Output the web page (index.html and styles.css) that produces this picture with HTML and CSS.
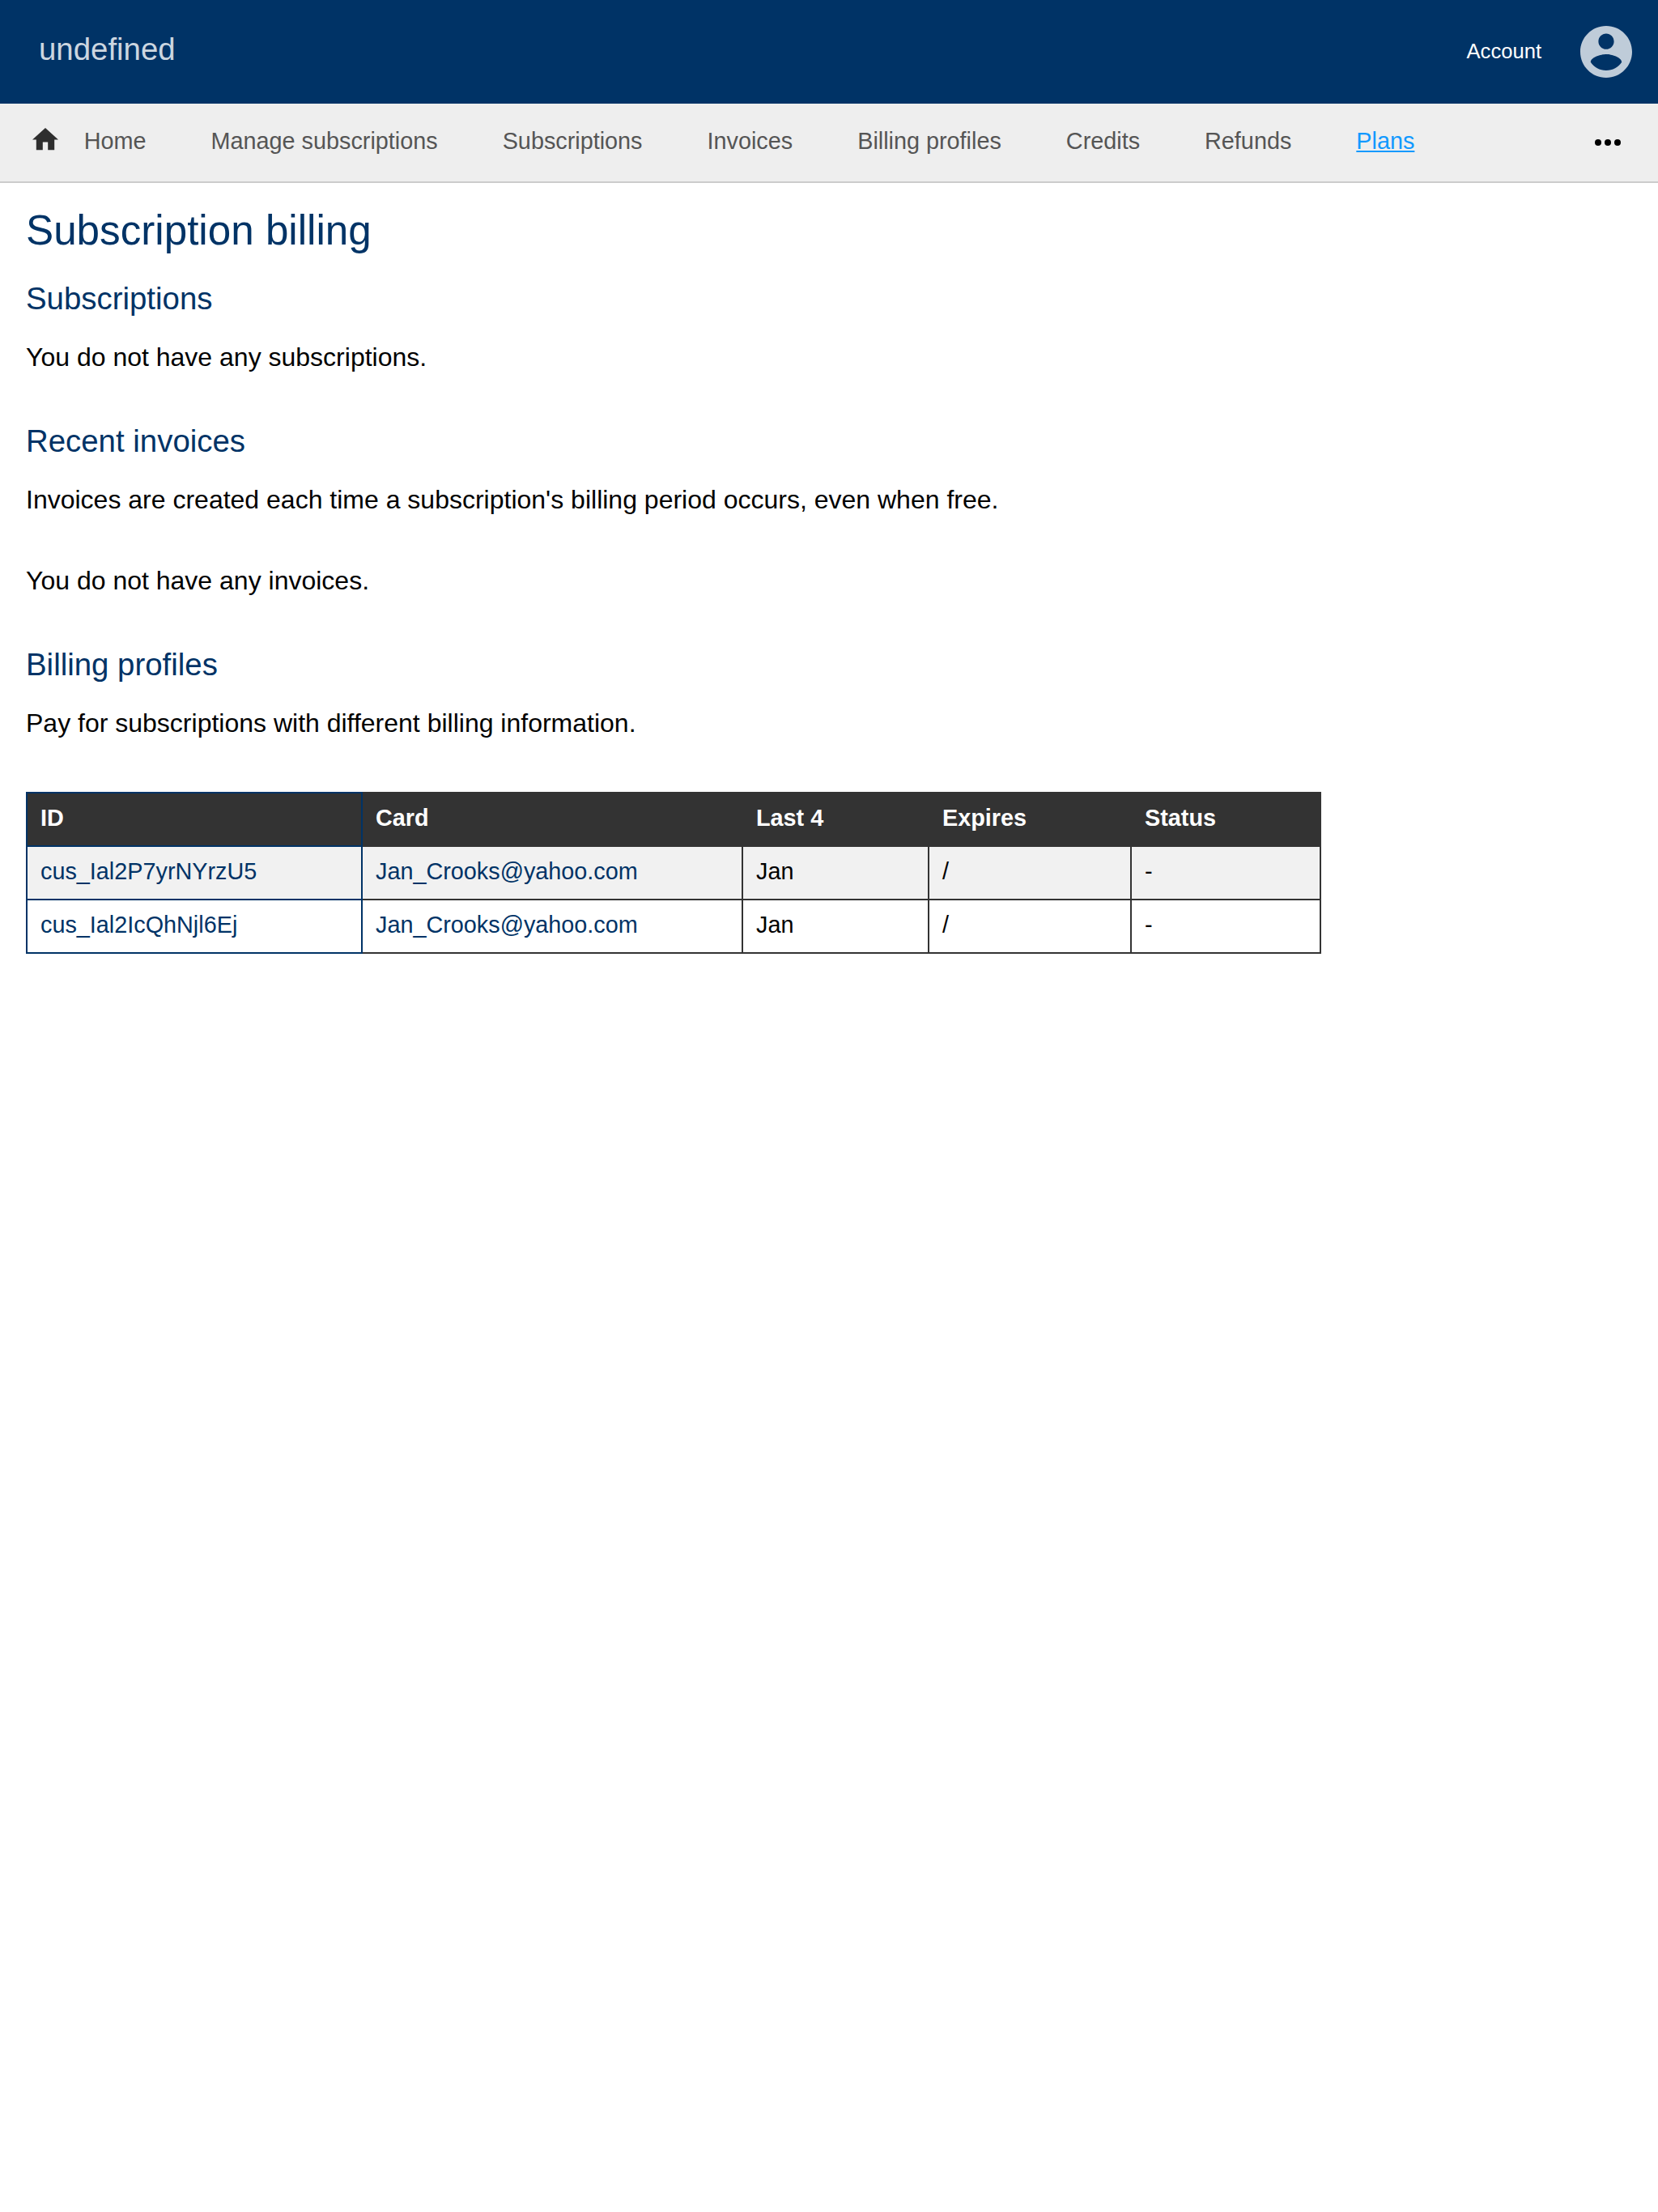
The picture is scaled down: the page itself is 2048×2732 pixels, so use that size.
FILE: index.html
```html
<!DOCTYPE html>
<html lang="en">
<head>
<meta charset="utf-8">
<title>Subscription billing</title>
<link rel="stylesheet" href="styles.css">
</head>
<body>
<header class="header">
  <h1 class="brand">undefined</h1>
  <nav class="account">
    <a class="account-link">Account</a>
    <svg class="avatar" viewBox="2 2 20 20"><path d="M12 2C6.48 2 2 6.48 2 12s4.48 10 10 10 10-4.48 10-10S17.52 2 12 2zm0 3c1.66 0 3 1.34 3 3s-1.34 3-3 3-3-1.34-3-3 1.34-3 3-3zm0 14.2c-2.5 0-4.71-1.28-6-3.22.03-1.99 4-3.08 6-3.08 1.99 0 5.97 1.09 6 3.08-1.29 1.94-3.5 3.22-6 3.22z"/></svg>
  </nav>
</header>
<nav class="navbar">
  <svg class="home-icon" viewBox="2 3 20 17"><path d="M10 20v-6h4v6h5v-8h3L12 3 2 12h3v8z"/></svg>
  <a class="nav-link">Home</a>
  <a class="nav-link">Manage subscriptions</a>
  <a class="nav-link">Subscriptions</a>
  <a class="nav-link">Invoices</a>
  <a class="nav-link">Billing profiles</a>
  <a class="nav-link">Credits</a>
  <a class="nav-link">Refunds</a>
  <a class="nav-link active">Plans</a>
  <svg class="more-icon" viewBox="0 0 32 8"><circle cx="4" cy="4" r="4"/><circle cx="16" cy="4" r="4"/><circle cx="28" cy="4" r="4"/></svg>
</nav>
<main class="content">
  <h1 class="title">Subscription billing</h1>
  <section class="section">
    <h2 class="heading">Subscriptions</h2>
    <p class="text">You do not have any subscriptions.</p>
  </section>
  <section class="section">
    <h2 class="heading">Recent invoices</h2>
    <p class="text">Invoices are created each time a subscription's billing period occurs, even when free.</p>
    <p class="text">You do not have any invoices.</p>
  </section>
  <section class="section">
    <h2 class="heading">Billing profiles</h2>
    <p class="text">Pay for subscriptions with different billing information.</p>
    <table class="table">
      <colgroup><col class="col-id"><col class="col-card"><col class="col-last"><col class="col-expires"><col class="col-status"></colgroup>
      <thead><tr><th>ID</th><th>Card</th><th>Last 4</th><th>Expires</th><th>Status</th></tr></thead>
      <tbody>
        <tr><td>cus_Ial2P7yrNYrzU5</td><td>Jan_Crooks@yahoo.com</td><td>Jan</td><td>/</td><td>-</td></tr>
        <tr><td>cus_Ial2IcQhNjl6Ej</td><td>Jan_Crooks@yahoo.com</td><td>Jan</td><td>/</td><td>-</td></tr>
      </tbody>
    </table>
  </section>
</main>
</body>
</html>
```
FILE: styles.css
```css
* { box-sizing: border-box; }
body { margin: 0; background: #fff; color: #000; font: 32px "Liberation Sans", Arial, sans-serif; }
h1, h2, p { margin: 0; font-weight: 400; }
.header { display: flex; justify-content: space-between; align-items: center; height: 128px; padding: 0 32px 0 48px; background: #036; }
.brand { color: #ccd6e0; font-size: 38.4px; line-height: 44px; padding-bottom: 6px; }
.account { display: flex; align-items: center; gap: 48px; }
.account-link { color: #fff; font-size: 25.6px; line-height: 30px; padding-bottom: 2px; }
.avatar { display: block; width: 64px; height: 64px; fill: #bfccd9; }
.navbar { display: flex; align-items: center; height: 98px; padding: 0 46px 0 40px; background: #eee; border-bottom: 2px solid #ccc; font-size: 28.8px; line-height: 32px; color: #555; }
.home-icon { width: 32px; height: 27.2px; margin: 0 -8.3px 8px 0; fill: #2e2e2e; }
.nav-link { padding: 0 40px 4px; white-space: nowrap; }
.active { color: #19f; text-decoration: underline; }
.more-icon { width: 32px; height: 8px; margin-left: auto; fill: #000; }
.content { padding: 30px 32px 0; }
.title { color: #036; font-size: 51.2px; line-height: 58px; margin-bottom: 33px; }
.heading { color: #036; font-size: 38.4px; line-height: 44px; margin-bottom: 32px; }
.text { line-height: 36px; margin-bottom: 64px; }
.table { width: 1600px; margin-top: 67px; table-layout: fixed; border-collapse: collapse; font-size: 28.8px; line-height: 32px; }
.col-id { width: 414px; }
.col-card { width: 470px; }
.col-last { width: 230px; }
.col-expires { width: 250px; }
.col-status { width: 234px; }
.table th, .table td { padding: 14px 16px 18px; border: 2px solid #333; text-align: left; }
.table th { background: #333; color: #fff; font-weight: 700; }
.table tbody tr:nth-child(odd) { background: #f1f1f1; }
.table td:nth-child(-n+2) { color: #036; }
.table th:first-child, .table td:first-child { border-color: #036; }
```
